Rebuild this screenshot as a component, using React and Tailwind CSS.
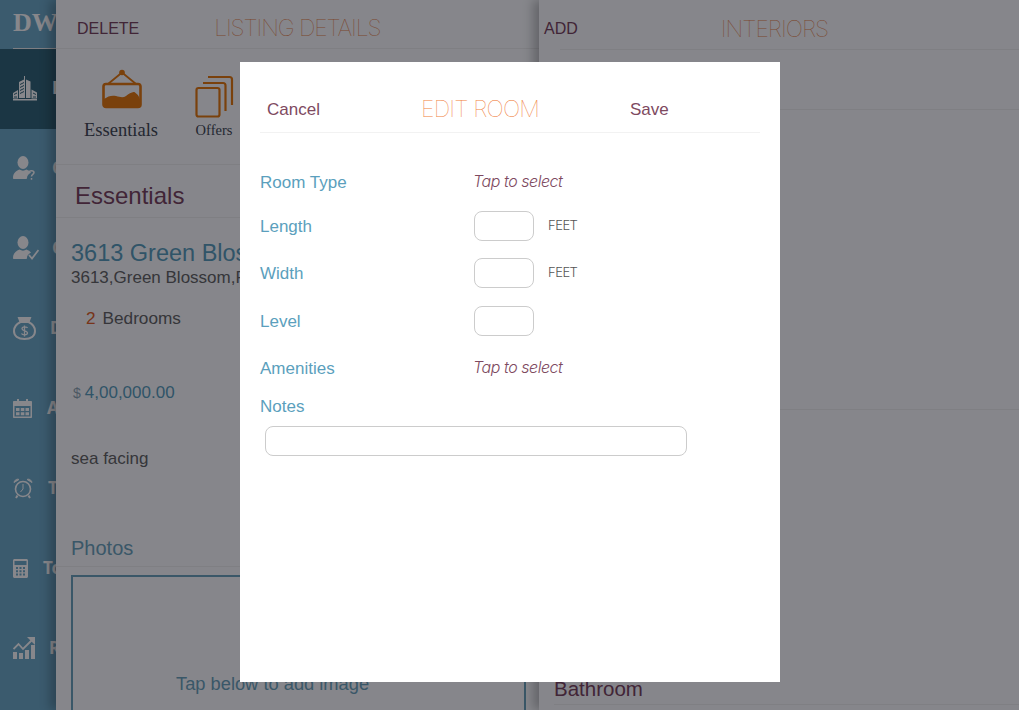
const SANS = "font-['Liberation_Sans',Arial,sans-serif]";

function BuildingIcon() {
  return (
    <svg width="24" height="25" viewBox="0 0 24 25" fill="white">
      <path d="M11 0h1v4l-1-.5z" />
      <path d="M6 6l6-3v19H6z" />
      <path d="M13 3.500l4.500 2V22H13z" />
      <path d="M0 17l5-3v8.500H0zM18.500 13.500L24 16.500V22.500h-5.500z" />
      <path d="M0 23h24v1.500H0z" />
      <path d="M7 8.500l4-2M7 11.500l4-2M7 14.500l4-2M7 17.500l4-2M1 18.500l3-1.500M1 21h3M20 17l3 1.500M20 21h3" stroke="#336678" strokeWidth="1" />
    </svg>
  );
}

function PersonBadge({ badge }) {
  return (
    <svg width="26" height="24" viewBox="0 0 26 24" fill="white">
      <ellipse cx="10" cy="6.500" rx="5.500" ry="6.500" />
      <path d="M0 22c0-5 3-7 6.500-8.500 2 1.500 5 1.500 7 0 2 .8 3.500 1.800 4.500 3.200-2.500 1-4 3-4 5.300 0 .7-.5 1-1 1H1c-.6 0-1-.4-1-1z" />
      {badge === 'check' && <path d="M16 19l3 3.500L25.500 14" fill="none" stroke="white" strokeWidth="1.800" />}
      {badge === 'question' && (
        <path d="M16 16.500c0-2.500 5-2.500 5 0 0 2-2.500 1.800-2.500 4M18.500 22v1.800" fill="none" stroke="white" strokeWidth="1.500" />
      )}
    </svg>
  );
}

function BagIcon() {
  return (
    <svg width="23" height="23" viewBox="0 0 23 23" fill="none" stroke="white" strokeWidth="2">
      <path d="M6 1h11l-1.500 4h-8z" fill="white" />
      <path d="M7.500 5C3.500 7 1 10 1 14c0 5 4 8 10.500 8S22 19 22 14c0-4-2.500-7-6.500-9z" />
      <path d="M14.500 11c-.5-1.500-5.500-1.800-5.500.8 0 2.700 5.500 1.400 5.500 4.200 0 2.500-5.300 2.200-6 .4M11.500 8.500v11" strokeWidth="1.300" />
    </svg>
  );
}

function CalendarIcon() {
  return (
    <svg width="19" height="19" viewBox="0 0 19 19" fill="white">
      <path fillRule="evenodd" d="M1 2h3V0h2v2h7V0h2v2h3c.6 0 1 .4 1 1v15c0 .6-.4 1-1 1H1c-.6 0-1-.4-1-1V3c0-.6.4-1 1-1zm.5 5v10.500h16V7z" />
      <path d="M3 9h3.500v3H3zM7.800 9h3.500v3H7.800zM12.500 9H16v3h-3.500zM3 13.200h3.500v3H3zM7.800 13.200h3.500v3H7.800zM12.500 13.200H16v3h-3.500z" />
    </svg>
  );
}

function ClockIcon() {
  return (
    <svg width="20" height="21" viewBox="0 0 20 21" fill="none" stroke="white" strokeWidth="1.600">
      <circle cx="10" cy="11" r="7.500" />
      <path d="M10 6v5l-2.500 3" strokeWidth="1" />
      <path d="M1 4.500C1.500 2 4 .5 6 1.500zM19 4.500C18.500 2 16 .5 14 1.500z" fill="white" strokeWidth="1" />
      <path d="M4.500 17.500L3 20M15.500 17.500L17 20" strokeWidth="2" />
    </svg>
  );
}

function CalculatorIcon() {
  return (
    <svg width="15" height="19" viewBox="0 0 15 19" fill="white">
      <path fillRule="evenodd" d="M1.500 0h12c.8 0 1.500.7 1.500 1.500v16c0 .8-.7 1.500-1.500 1.500h-12C.7 19 0 18.300 0 17.500v-16C0 .7.700 0 1.500 0zm0 2v4h12V2z" />
      <path d="M3 8h2v2H3zM6.500 8h2v2h-2zM10 8h2v2h-2zM3 11.200h2v2H3zM6.500 11.200h2v2h-2zM10 11.200h2v2h-2zM3 14.400h2v2H3zM6.500 14.400h2v2h-2zM10 14.400h2v2h-2z" fill="#6fabc8" />
    </svg>
  );
}

function ChartIcon() {
  return (
    <svg width="22" height="22" viewBox="0 0 22 22" fill="white">
      <path d="M0 15h4v7H0zM6 16h4v6H6zM12 13h4v9h-4zM18 8h4v14h-4z" />
      <path d="M0.500 12l5-5 4.500 5L19 3" fill="none" stroke="white" strokeWidth="1.800" />
      <path d="M14 0h8v8z" />
    </svg>
  );
}

function PictureIcon() {
  return (
    <svg width="40" height="40" viewBox="0 0 40 40" fill="none">
      <circle cx="20" cy="3.500" r="2.800" fill="#e67a0f" />
      <path d="M20 3.500L6 15M20 3.500L34 15" stroke="#e67a0f" strokeWidth="1.800" />
      <rect x="1.500" y="15" width="37" height="23" rx="2.500" stroke="#e67a0f" strokeWidth="2.600" />
      <path d="M2 37v-7c4-3 8-4 12-3s7 2 10 0 7-5 9-3.500 4 3 5 7V37z" fill="#e67a0f" />
    </svg>
  );
}

function StackIcon() {
  return (
    <svg width="39" height="43" viewBox="0 0 39 43" fill="none" stroke="#e67a0f" strokeWidth="2.200">
      <rect x="1.500" y="13" width="23" height="28.500" rx="2" />
      <path d="M8 8h20c1.500 0 2.500 1 2.500 2.500V36" />
      <path d="M13 2h21.500c1.500 0 2.500 1 2.500 2.500V30" />
    </svg>
  );
}

const NAV_ITEMS = [
  { icon: <BuildingIcon />, label: 'Listings', labelGap: 'ml-[15px]', active: true },
  { icon: <PersonBadge badge="question" />, label: 'Clients', labelGap: 'ml-[13px]' },
  { icon: <PersonBadge badge="check" />, label: 'Contacts', labelGap: 'ml-[13px]' },
  { icon: <BagIcon />, label: 'Deals', labelGap: 'ml-[14px]' },
  { icon: <CalendarIcon />, label: 'Appointments', labelGap: 'ml-[15px]' },
  { icon: <ClockIcon />, label: 'Tasks', labelGap: 'ml-[15px]' },
  { icon: <CalculatorIcon />, label: 'Tools', labelGap: 'ml-[15px]' },
  { icon: <ChartIcon />, label: 'Reports', labelGap: 'ml-[14px]' },
];

function Sidebar() {
  return (
    <div className="w-[56px] shrink-0 overflow-hidden bg-[#6fabc8]">
      <div className="ml-[13px] flex h-[49px] w-[100px] items-center border-b border-[#eeeeee] pb-[4px] font-['Liberation_Serif',serif] text-[26px] font-bold text-white">
        DWELL
      </div>
      {NAV_ITEMS.map((item) => (
        <div key={item.label} className={`flex h-[80px] w-[200px] items-center pb-[2px] ${item.active ? 'bg-[#336678]' : ''}`}>
          <div className="ml-[13px]">{item.icon}</div>
          <span className={`${item.labelGap} text-[17px] font-bold text-white`}>{item.label}</span>
        </div>
      ))}
    </div>
  );
}

function PanelTitle({ children, className }) {
  return <span className={`font-['Inter',sans-serif] text-[23px] font-thin text-[#e8874f] ${className}`}>{children}</span>;
}

function ListingPanel() {
  return (
    <div className={`relative z-10 w-[483px] shrink-0 overflow-hidden bg-[#fdfeff] shadow-[-6px_0_10px_rgba(0,0,0,0.25)] ${SANS}`}>
      <div className="flex h-[49px] items-center border-b border-[#f0f0f0] pt-[9px]">
        <span className="ml-[21px] text-[16px] text-[#7b4560]">DELETE</span>
        <PanelTitle className="ml-[75px] tracking-[-1.15px]">LISTING DETAILS</PanelTitle>
      </div>

      <div className="flex h-[116px] border-b border-[#f0f0f0] font-['Liberation_Serif',serif] text-[#444a55]">
        <div className="ml-[27px] flex w-[76px] flex-col items-center pt-[20px]">
          <div className="ml-[2px]">
            <PictureIcon />
          </div>
          <span className="mt-[10px] text-[18.5px] leading-[22px]">Essentials</span>
        </div>
        <div className="ml-[27px] flex w-[56px] flex-col items-center pt-[26px]">
          <StackIcon />
          <span className="mt-[2px] text-[14.5px] leading-[20px]">Offers</span>
        </div>
      </div>

      <div className="flex h-[53px] items-center border-b border-[#f0f0f0] pl-[19px] pt-[10px] text-[24px] text-[#7b4560]">Essentials</div>

      <div className="pl-[15px]">
        <div className="mt-[21px] text-[23.5px] leading-[28px] text-[#5b9fbd]">3613 Green Blossom</div>
        <div className="text-[17px] leading-[22px] text-[#666666]">3613,Green Blossom,Pune</div>
        <div className="ml-[15px] mt-[17px] text-[17.2px] leading-[24px] text-[#666666]">
          <span className="text-[#e2632a]">2</span>
          <span className="ml-[7px]">Bedrooms</span>
        </div>
        <div className="ml-[2px] mt-[51px] flex items-baseline leading-[24px]">
          <span className="text-[14px] text-[#8fa6b3]">$</span>
          <span className="ml-[4px] text-[17px] text-[#5b9fbd]">4,00,000.00</span>
        </div>
        <div className="mt-[42px] text-[17px] leading-[24px] text-[#666666]">sea facing</div>
      </div>

      <div className="mt-[63px] flex h-[33px] items-center border-b border-[#f0f0f0] pb-[4px] pl-[15px] text-[20px] text-[#6ea5bd]">Photos</div>

      <div className="ml-[15px] mt-[8px] h-[200px] w-[455px] border-2 border-[#6ea5bd] pl-[103px] pt-[93px] text-[18.3px] text-[#6ea5bd]">
        Tap below to add image
      </div>
    </div>
  );
}

function InteriorsPanel() {
  return (
    <div className={`relative z-20 flex-1 overflow-hidden bg-[#fdfeff] shadow-[-6px_0_10px_rgba(0,0,0,0.25)] ${SANS}`}>
      <div className="flex h-[49px] items-center pt-[9px]">
        <span className="ml-[5px] text-[16px] text-[#7b4560]">ADD</span>
        <PanelTitle className="ml-[143px] tracking-[-1px]">INTERIORS</PanelTitle>
      </div>
      <div className="ml-[21px] border-t border-[#f0f0f0]">
        <div className="h-[60px] border-b border-[#f0f0f0]" />
        <div className="h-[300px] border-b border-[#f0f0f0]" />
      </div>
      <div className="ml-[15px] mt-[267px] border-b border-[#f0f0f0] pb-[3px] text-[20.5px] leading-[24px] text-[#7b4560]">Bathroom</div>
    </div>
  );
}

function FieldLabel({ children }) {
  return <span className="w-[214px] shrink-0 pt-[2px] text-[17px] leading-[24px] text-[#5b9fbd]">{children}</span>;
}

function TapToSelect() {
  return <span className="-ml-px mb-[2px] font-['Inter',sans-serif] text-[16px] font-light italic tracking-[-0.45px] text-[#7e4a5f]">Tap to select</span>;
}

function NumberRow({ label, unit, className }) {
  return (
    <div className={`flex h-[30px] items-center ${className}`}>
      <FieldLabel>{label}</FieldLabel>
      <div className="h-[30px] w-[60px] rounded-[8px] border border-[#cccccc]" />
      {unit && <span className="mb-[1px] ml-[14px] font-['Inter',sans-serif] text-[13px] font-light tracking-[-0.5px] text-[#555555]">{unit}</span>}
    </div>
  );
}

function EditRoomModal() {
  return (
    <div className="absolute inset-0 z-30 bg-[#000008]/[0.47] pl-[240px] pt-[62px]">
      <div className={`h-[620px] w-[540px] bg-white px-5 ${SANS}`}>
        <div className="flex h-[71px] items-center border-b border-[#f2f2f2] pt-[25px]">
          <span className="ml-[7px] w-[154px] text-[17px] text-[#7e4a5f]">Cancel</span>
          <span className="w-[209px] font-['Inter',sans-serif] text-[23px] font-thin tracking-[-0.8px] text-[#f0803c]">EDIT ROOM</span>
          <span className="text-[17px] text-[#7e4a5f]">Save</span>
        </div>

        <div className="mt-[37px] flex h-[24px] items-center">
          <FieldLabel>Room Type</FieldLabel>
          <TapToSelect />
        </div>
        <NumberRow label="Length" unit="FEET" className="mt-[17px]" />
        <NumberRow label="Width" unit="FEET" className="mt-[17px]" />
        <NumberRow label="Level" className="mt-[18px]" />
        <div className="mt-[20px] flex h-[24px] items-center">
          <FieldLabel>Amenities</FieldLabel>
          <TapToSelect />
        </div>
        <div className="mt-[13px] flex h-[24px]">
          <FieldLabel>Notes</FieldLabel>
        </div>
        <div className="ml-[5px] mt-[9px] h-[30px] w-[422px] rounded-[8px] border border-[#cccccc]" />
      </div>
    </div>
  );
}

export default function App() {
  return (
    <div className="relative flex h-[710px] w-full overflow-hidden">
      <Sidebar />
      <ListingPanel />
      <InteriorsPanel />
      <EditRoomModal />
    </div>
  );
}
